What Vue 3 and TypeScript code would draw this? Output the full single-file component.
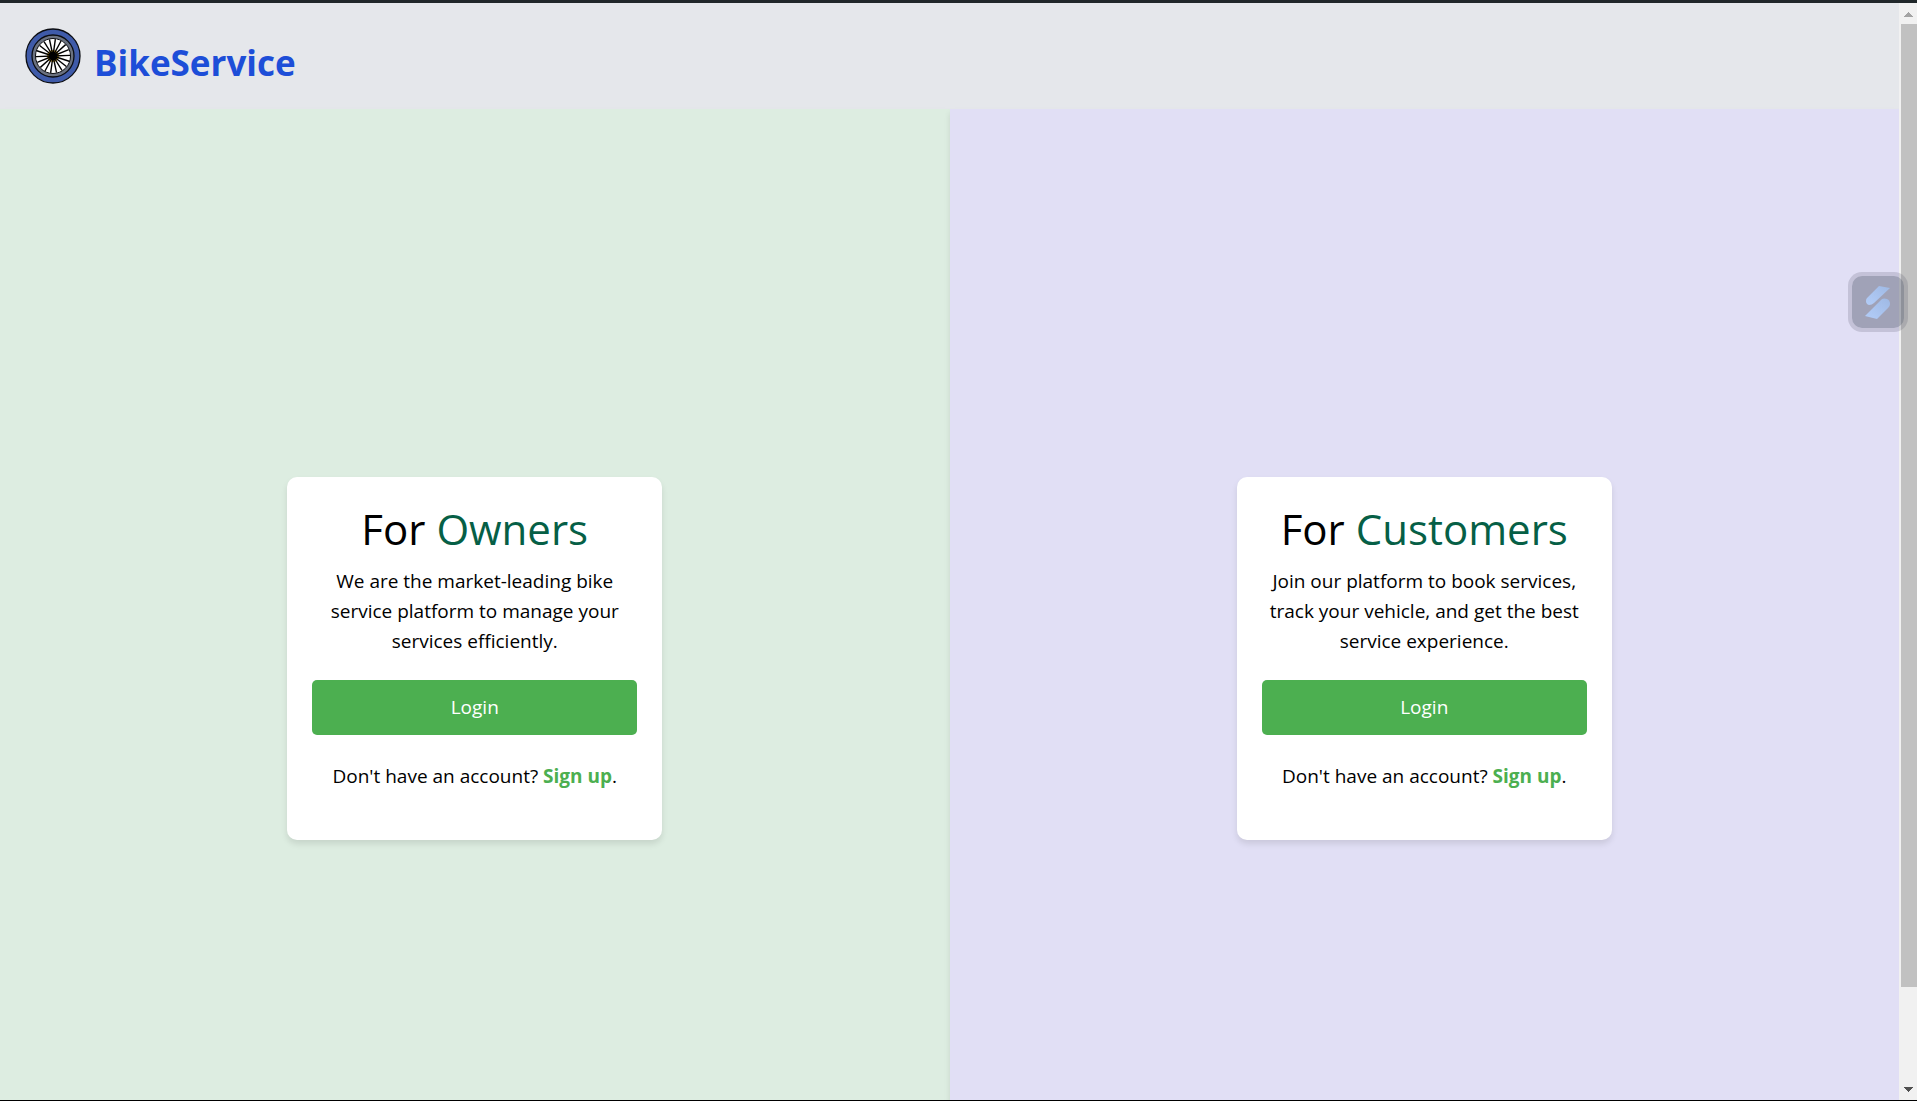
<script setup lang="ts">
interface Portal {
  id: string
  audience: string
  text: string
}

const portals: Portal[] = [
  {
    id: 'owners',
    audience: 'Owners',
    text: 'We are the market-leading bike service platform to manage your services efficiently.',
  },
  {
    id: 'customers',
    audience: 'Customers',
    text: 'Join our platform to book services, track your vehicle, and get the best service experience.',
  },
]

const spokes: number[] = Array.from({ length: 18 }, (_, i) => i * 20 + 8)
</script>

<template>
  <div class="window">
    <div class="view">
      <div class="page">
        <header class="header">
          <svg class="logo" viewBox="0 0 56 56" aria-hidden="true">
            <circle cx="28" cy="28" r="27" fill="#3f5ba9" stroke="#0b0d12" stroke-width="1.3" />
            <circle cx="28" cy="28" r="21" fill="#6b7280" stroke="#0b0d12" stroke-width="1.3" />
            <circle cx="28" cy="28" r="17.5" fill="#fff" stroke="#0b0d12" stroke-width="1" />
            <circle cx="28" cy="28" r="6" fill="#c99a1c" />
            <line
              v-for="angle in spokes"
              :key="angle"
              x1="28"
              y1="28"
              x2="28"
              y2="11"
              stroke="#000"
              stroke-width="1.4"
              :transform="`rotate(${angle} 28 28)`"
            />
            <circle cx="28" cy="28" r="4.2" fill="#000" />
          </svg>
          <span class="brand">BikeService</span>
        </header>
        <main class="panels">
          <section v-for="portal in portals" :key="portal.id" class="panel" :class="portal.id">
            <div class="card">
              <h1>For <span>{{ portal.audience }}</span></h1>
              <p class="intro">{{ portal.text }}</p>
              <button type="button" class="login">Login</button>
              <p class="signup">Don't have an account? <a href="#">Sign up</a>.</p>
            </div>
          </section>
        </main>
      </div>
      <div class="scrollbar" aria-hidden="true">
        <svg class="arrow up" viewBox="0 0 9 5"><path d="M4 0h1v1h1v1h1v1h1v1h1v1H0V4h1V3h1V2h1V1h1z" /></svg>
        <div class="track"><div class="thumb"></div></div>
        <svg class="arrow down" viewBox="0 0 9 5"><path d="M0 0h9v1H8v1H7v1H6v1H5v1H4V4H3V3H2V2H1V1H0z" /></svg>
      </div>
    </div>
    <button type="button" class="widget" aria-label="Open assistant">
      <svg viewBox="0 0 26 34" aria-hidden="true">
        <defs>
          <linearGradient id="bolt" x1="1" y1="0" x2="0" y2="1">
            <stop offset="0" stop-color="#9fb9e4" />
            <stop offset="1" stop-color="#b3cdf8" />
          </linearGradient>
        </defs>
        <path d="M14 1L25 3L9 18Q7 20 4 20Q1 19 1 16Q1 14 2 13Z" fill="url(#bolt)" />
        <path d="M17 14Q19 13 22 14Q25 15 25 19Q25 21 23 23L12 34L0 31Z" fill="url(#bolt)" />
      </svg>
    </button>
  </div>
</template>

<style>
body {
  margin: 0;
}
</style>

<style scoped>
.window {
  position: relative;
  box-sizing: border-box;
  height: 100vh;
  overflow: hidden;
  border-top: 3px solid #20272a;
  border-bottom: 1px solid #000;
  font-family: "Segoe UI", "Open Sans", "Noto Sans", sans-serif;
  font-size: 19px;
  line-height: 30px;
  color: #000;
}

.view {
  display: flex;
  height: 100%;
}

.page {
  flex: 1;
  min-width: 0;
  overflow: hidden;
}

.header {
  display: flex;
  align-items: center;
  gap: 13px;
  box-sizing: border-box;
  height: 106px;
  padding: 0 25px;
  background: #e5e7eb;
}

.logo {
  width: 56px;
  height: 56px;
}

.brand {
  padding-top: 14px;
  font-size: 35px;
  line-height: 40px;
  font-weight: 700;
  color: #1d4ed8;
}

.panels {
  display: flex;
  min-height: calc(100vh - 3px);
}

.panel {
  flex: 1;
  display: flex;
  align-items: center;
  justify-content: center;
  box-shadow: 0 4px 6px rgba(0, 0, 0, 0.1);
}

.owners {
  background: #ddede1;
}

.customers {
  background: #e1dff5;
}

.card {
  box-sizing: border-box;
  width: 375px;
  padding: 25px;
  border-radius: 10px;
  background: #fff;
  box-shadow: 0 4px 6px rgba(0, 0, 0, 0.1);
  text-align: center;
}

h1 {
  margin: 0 0 10px;
  font-size: 42px;
  line-height: 54px;
  font-weight: 400;
}

h1 span {
  color: #065f46;
}

.intro {
  margin: 0 0 24px;
}

.login {
  display: block;
  width: 100%;
  height: 55px;
  padding: 0;
  border: 0;
  border-radius: 5px;
  background: #4caf50;
  color: #fff;
  font: inherit;
  cursor: pointer;
}

.signup {
  margin: 26px 0 24px;
}

.signup a {
  color: #4caf50;
  font-weight: 700;
  text-decoration: none;
}

.scrollbar {
  display: flex;
  flex-direction: column;
  align-items: flex-end;
  width: 18px;
  background: #f1f1f1;
}

.arrow {
  width: 9px;
  height: 5px;
  margin-right: 4px;
}

.up {
  margin-top: 9px;
  margin-bottom: 7px;
  fill: #a3a3a3;
}

.down {
  margin-top: 8px;
  margin-bottom: 8px;
  fill: #505050;
}

.track {
  flex: 1;
  width: 16px;
}

.thumb {
  height: 91.3%;
  background: #c1c1c1;
}

.widget {
  position: absolute;
  top: 269px;
  right: 9px;
  display: flex;
  align-items: center;
  justify-content: center;
  width: 60px;
  height: 60px;
  padding: 0;
  border: 4px solid rgba(80, 80, 100, 0.2);
  border-radius: 14px;
  background: rgba(74, 81, 101, 0.43);
  background-clip: padding-box;
  cursor: pointer;
}

.widget svg {
  width: 26px;
  height: 34px;
}
</style>
